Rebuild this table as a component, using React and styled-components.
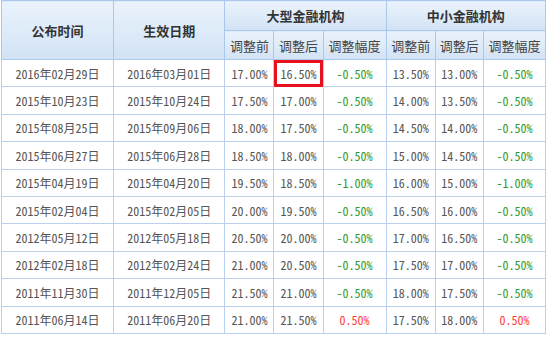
import React from 'react';
import styled, { createGlobalStyle } from 'styled-components';

const GlobalStyle = createGlobalStyle`
  html, body {
    margin: 0;
    padding: 0;
    background: #fff;
  }
`;

const Table = styled.table`
  margin: 0 0 0 1px;
  width: 545px;
  border-collapse: collapse;
  table-layout: fixed;
  font-family: "Noto Sans Mono CJK SC", "DejaVu Sans Mono", "Noto Sans CJK SC", monospace;
`;

const HeadCell = styled.th`
  height: ${(p) => p.h}px;
  padding: 0;
  border: 1px solid #a9c8eb;
  background: linear-gradient(#eaf3fc, #d2e3f5);
  color: ${(p) => (p.sub ? '#444' : '#333')};
  font-family: "Noto Sans CJK SC", sans-serif;
  font-size: 13px;
  font-weight: ${(p) => (p.sub ? 400 : 700)};
  text-align: center;
  vertical-align: middle;
`;

const Row = styled.tr`
  height: 27.4px;
`;

const Cell = styled.td`
  padding: 0;
  border: 1px solid #b9d1ec;
  color: ${(p) => (p.tone === 'down' ? '#2f9a2f' : p.tone === 'up' ? '#ff3b3b' : '#555')};
  font-size: 12px;
  text-align: center;
  vertical-align: middle;
  white-space: nowrap;
  outline: ${(p) => (p.mark ? '3px solid #e8101c' : 'none')};
  outline-offset: -3px;
`;

const rows = [
  ['2016年02月29日', '2016年03月01日', '17.00%', '16.50%', '-0.50%', '13.50%', '13.00%', '-0.50%'],
  ['2015年10月23日', '2015年10月24日', '17.50%', '17.00%', '-0.50%', '14.00%', '13.50%', '-0.50%'],
  ['2015年08月25日', '2015年09月06日', '18.00%', '17.50%', '-0.50%', '14.50%', '14.00%', '-0.50%'],
  ['2015年06月27日', '2015年06月28日', '18.50%', '18.00%', '-0.50%', '15.00%', '14.50%', '-0.50%'],
  ['2015年04月19日', '2015年04月20日', '19.50%', '18.50%', '-1.00%', '16.00%', '15.00%', '-1.00%'],
  ['2015年02月04日', '2015年02月05日', '20.00%', '19.50%', '-0.50%', '16.50%', '16.00%', '-0.50%'],
  ['2012年05月12日', '2012年05月18日', '20.50%', '20.00%', '-0.50%', '17.00%', '16.50%', '-0.50%'],
  ['2012年02月18日', '2012年02月24日', '21.00%', '20.50%', '-0.50%', '17.50%', '17.00%', '-0.50%'],
  ['2011年11月30日', '2011年12月05日', '21.50%', '21.00%', '-0.50%', '18.00%', '17.50%', '-0.50%'],
  ['2011年06月14日', '2011年06月20日', '21.00%', '21.50%', '0.50%', '17.50%', '18.00%', '0.50%'],
];

const widths = [112, 111, 49, 49, 63, 49, 48, 62];

// 幅度列按正负着色
const toneOf = (i, v) => {
  if (i !== 4 && i !== 7) return null;
  return v.startsWith('-') ? 'down' : 'up';
};

export default function App() {
  return (
    <>
      <GlobalStyle />
      <Table>
        <colgroup>
          {widths.map((w, i) => (
            <col key={i} style={{ width: w }} />
          ))}
        </colgroup>
        <thead>
          <tr>
            <HeadCell h={29} rowSpan={2}>公布时间</HeadCell>
            <HeadCell h={29} rowSpan={2}>生效日期</HeadCell>
            <HeadCell h={29} colSpan={3}>大型金融机构</HeadCell>
            <HeadCell h={29} colSpan={3}>中小金融机构</HeadCell>
          </tr>
          <tr>
            <HeadCell h={28} sub>调整前</HeadCell>
            <HeadCell h={28} sub>调整后</HeadCell>
            <HeadCell h={28} sub>调整幅度</HeadCell>
            <HeadCell h={28} sub>调整前</HeadCell>
            <HeadCell h={28} sub>调整后</HeadCell>
            <HeadCell h={28} sub>调整幅度</HeadCell>
          </tr>
        </thead>
        <tbody>
          {rows.map((r, ri) => (
            <Row key={ri}>
              {r.map((v, i) => (
                <Cell key={i} tone={toneOf(i, v)} mark={ri === 0 && i === 3}>
                  {v}
                </Cell>
              ))}
            </Row>
          ))}
        </tbody>
      </Table>
    </>
  );
}
